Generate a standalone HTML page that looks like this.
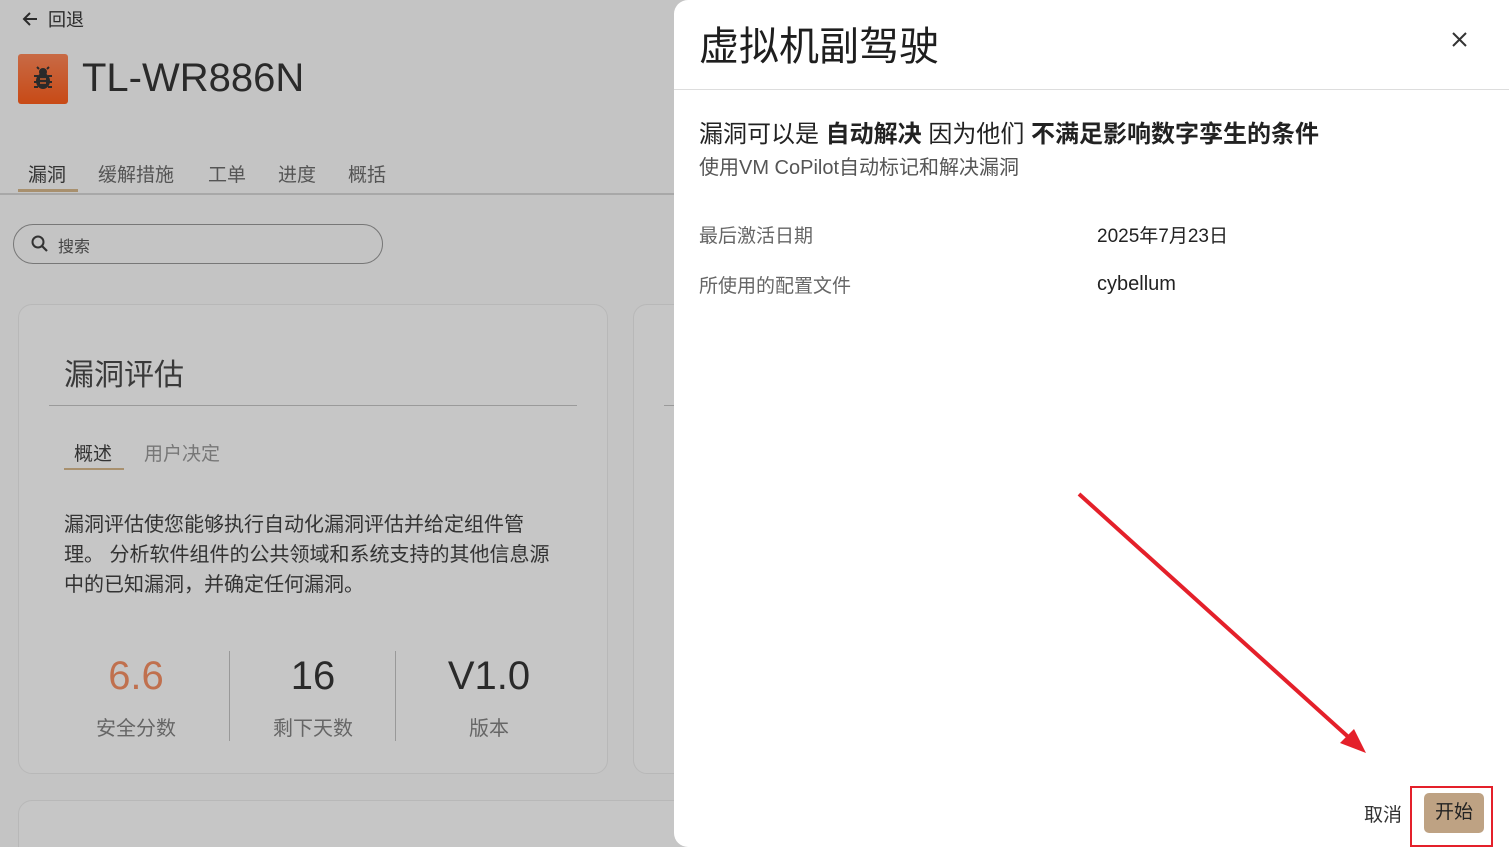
<!DOCTYPE html>
<html><head><meta charset="utf-8"><style>
*{margin:0;padding:0;box-sizing:border-box}
html,body{width:1509px;height:847px;overflow:hidden}
body{background:#c4c4c4;font-family:"Liberation Sans","Noto Sans CJK SC",sans-serif;position:relative;color:#2a2a2a}
.a{position:absolute}
.card{position:absolute;border:1px solid #b8b8b8;border-radius:14px;background:#c6c6c6}
</style></head><body>
<svg class="a" style="left:21px;top:10px" width="18" height="18"><path d="M16 9H3M9 3L3 9l6 6" fill="none" stroke="#2b2b2b" stroke-width="2"/></svg>
<div class="a" style="left:48px;top:6px;font-size:18px;color:#2b2b2b">回退</div>
<div class="a" style="left:18px;top:54px;width:50px;height:50px;border-radius:3px;background:linear-gradient(#c86a45,#c84a16)">
<svg width="50" height="50" viewBox="0 0 50 50"><g fill="#2a2a2a"><ellipse cx="25" cy="27" rx="7" ry="8"/><circle cx="25" cy="18" r="4"/></g><g stroke="#2a2a2a" stroke-width="2"><path d="M16 22h4M16 28h4M16 33h4M30 22h4M30 28h4M30 33h4M21 15l-2-2M29 15l2-2"/></g><g stroke="#c8602e" stroke-width="1.5"><path d="M22 25h6M22 29h6"/></g></svg></div>
<div class="a" style="left:82px;top:56px;font-size:40px;color:#2a2a2a">TL-WR886N</div>
<div class="a" style="left:28px;top:160px;font-size:19px;color:#333">漏洞</div>
<div class="a" style="left:18px;top:189px;width:60px;height:3px;background:#a8906e"></div>
<div class="a" style="left:98px;top:160px;font-size:19px;color:#555">缓解措施</div>
<div class="a" style="left:208px;top:160px;font-size:19px;color:#555">工单</div>
<div class="a" style="left:278px;top:160px;font-size:19px;color:#555">进度</div>
<div class="a" style="left:348px;top:160px;font-size:19px;color:#555">概括</div>
<div class="a" style="left:0;top:193px;width:675px;height:2px;background:#a8a8a8"></div>
<div class="a" style="left:13px;top:224px;width:370px;height:40px;border:1px solid #777;border-radius:20px"></div>
<svg class="a" style="left:30px;top:234px" width="20" height="20"><circle cx="8" cy="8" r="5.5" fill="none" stroke="#333" stroke-width="2"/><path d="M12 12l5 5" stroke="#333" stroke-width="2.2"/></svg>
<div class="a" style="left:58px;top:233px;font-size:16px;color:#444">搜索</div>
<div class="card" style="left:18px;top:304px;width:590px;height:470px"></div>
<div class="card" style="left:633px;top:304px;width:100px;height:470px"></div>
<div class="card" style="left:18px;top:800px;width:700px;height:80px"></div>
<div class="a" style="left:64px;top:350px;font-size:30px;color:#3a3a3a">漏洞评估</div>
<div class="a" style="left:49px;top:405px;width:528px;height:1px;background:#9a9a9a"></div>
<div class="a" style="left:664px;top:405px;width:20px;height:1px;background:#9a9a9a"></div>
<div class="a" style="left:74px;top:439px;font-size:19px;color:#333">概述</div>
<div class="a" style="left:64px;top:468px;width:60px;height:2px;background:#a8906e"></div>
<div class="a" style="left:144px;top:439px;font-size:19px;color:#777">用户决定</div>
<div class="a" style="left:64px;top:510px;width:490px;font-size:20px;line-height:30px;color:#333">漏洞评估使您能够执行自动化漏洞评估并给定组件管理。 分析软件组件的公共领域和系统支持的其他信息源中的已知漏洞，并确定任何漏洞。</div>
<div class="a" style="left:46px;top:654px;width:180px;text-align:center;font-size:40px;color:#c0704e">6.6</div>
<div class="a" style="left:46px;top:712px;width:180px;text-align:center;font-size:20px;color:#666">安全分数</div>
<div class="a" style="left:229px;top:651px;width:1px;height:90px;background:#999"></div>
<div class="a" style="left:223px;top:654px;width:180px;text-align:center;font-size:40px;color:#2a2a2a">16</div>
<div class="a" style="left:223px;top:712px;width:180px;text-align:center;font-size:20px;color:#666">剩下天数</div>
<div class="a" style="left:395px;top:651px;width:1px;height:90px;background:#999"></div>
<div class="a" style="left:399px;top:654px;width:180px;text-align:center;font-size:40px;color:#2a2a2a">V1.0</div>
<div class="a" style="left:399px;top:712px;width:180px;text-align:center;font-size:20px;color:#666">版本</div>

<div class="a" style="left:674px;top:0;width:840px;height:847px;background:#fff;border-radius:14px 0 0 14px"></div>
<div class="a" style="left:699px;top:14px;font-size:40px;color:#1e1e1e">虚拟机副驾驶</div>
<svg class="a" style="left:1451px;top:31px" width="17" height="17"><path d="M2 2l13 13M15 2L2 15" stroke="#333" stroke-width="2"/></svg>
<div class="a" style="left:674px;top:89px;width:835px;height:1px;background:#ddd"></div>
<div class="a" style="left:699px;top:114px;font-size:24px;color:#222">漏洞可以是 <b>自动解决</b> 因为他们 <b>不满足影响数字孪生的条件</b></div>
<div class="a" style="left:699px;top:151px;font-size:20px;color:#555">使用VM CoPilot自动标记和解决漏洞</div>
<div class="a" style="left:699px;top:221px;font-size:19px;color:#666">最后激活日期</div>
<div class="a" style="left:1097px;top:221px;font-size:19px;color:#222">2025年7月23日</div>
<div class="a" style="left:699px;top:271px;font-size:19px;color:#666">所使用的配置文件</div>
<div class="a" style="left:1097px;top:273px;font-size:20px;color:#222">cybellum</div>
<svg class="a" style="left:1070px;top:485px" width="310" height="280"><path d="M9 9L285 258" stroke="#e4202a" stroke-width="4"/><path d="M296 268L270 258L284 244Z" fill="#e4202a"/></svg>
<div class="a" style="left:1364px;top:800px;font-size:19px;color:#333">取消</div>
<div class="a" style="left:1410px;top:786px;width:83px;height:61px;border:2px solid #e4202a"></div>
<div class="a" style="left:1424px;top:793px;width:60px;height:40px;background:#bea283;border-radius:5px;text-align:center;padding-top:9px;font-size:19px;line-height:22px;color:#222">开始</div>
</body></html>
